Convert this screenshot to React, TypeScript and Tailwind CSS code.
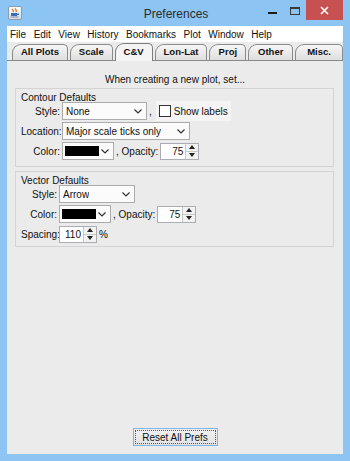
import type { ReactNode } from "react"

const font = { fontFamily: '"Liberation Sans", Arial, sans-serif' }

function Chevron() {
  return (
    <svg width="8" height="5" viewBox="0 0 8 5" className="shrink-0">
      <polyline points="0.5,0.5 4,4 7.5,0.5" fill="none" stroke="#333" strokeWidth="1.2" />
    </svg>
  )
}

function Combo({ width, children }: { width: number; children: ReactNode }) {
  return (
    <div
      className="flex h-[18px] items-center justify-between border border-[#acacac] bg-[#fbfbfb] pl-[3px] pr-[4px]"
      style={{ width }}
    >
      <span className="truncate">{children}</span>
      <Chevron />
    </div>
  )
}

function ColorCombo() {
  return (
    <div className="flex h-[18px] w-[52px] items-center justify-between border border-[#acacac] bg-[#fbfbfb] pl-[2px] pr-[4px]">
      <div className="h-[10px] w-[34px] bg-black" />
      <Chevron />
    </div>
  )
}

function Tri({ up }: { up?: boolean }) {
  return (
    <svg width="6" height="4" viewBox="0 0 6 4">
      <polygon points={up ? "0,4 6,4 3,0" : "0,0 6,0 3,4"} fill="#222" />
    </svg>
  )
}

function Spinner({ width, value }: { width: number; value: string }) {
  return (
    <div className="flex h-[17px] shrink-0 border border-[#abadb3] bg-white" style={{ width }}>
      <div className="flex flex-1 items-center justify-end pr-[2px]">{value}</div>
      <div className="flex w-[13px] flex-col border-l border-[#c8c8c8]">
        <div className="flex flex-1 items-center justify-center border-b border-[#c8c8c8] bg-[#f2f2f2]">
          <Tri up />
        </div>
        <div className="flex flex-1 items-center justify-center bg-[#f2f2f2]">
          <Tri />
        </div>
      </div>
    </div>
  )
}

const tabs = [
  { label: "All Plots", w: 56 },
  { label: "Scale", w: 43 },
  { label: "C&V", w: 38, active: true },
  { label: "Lon-Lat", w: 53 },
  { label: "Proj", w: 37 },
  { label: "Other", w: 45 },
  { label: "Misc.", w: 48 },
]

const menus = ["File", "Edit", "View", "History", "Bookmarks", "Plot", "Window", "Help"]

export default function App() {
  return (
    <div className="flex h-[461px] w-[350px] flex-col bg-[#8cc4f4] text-[10px] text-[#111]" style={font}>
      {/* title bar */}
      <div className="flex h-[26px] items-start">
        <div className="ml-[8px] mt-[6px] flex h-[14px] w-[14px] items-center justify-center rounded-[2px] border border-[#8a9bb0] bg-gradient-to-b from-[#fdfdfd] to-[#d6dde6]">
          <svg width="10" height="10" viewBox="0 0 10 10">
            <path d="M2 1 Q4 3 3 4 M5 0.5 Q7 2.5 6 4" stroke="#e0712a" strokeWidth="1.2" fill="none" />
            <rect x="1" y="5" width="6" height="3" fill="#3b6fb5" />
            <rect x="7" y="5.5" width="2" height="1.5" fill="#3b6fb5" />
            <rect x="0.5" y="8.5" width="8" height="1" fill="#7a8ca6" />
          </svg>
        </div>
        <div className="flex-1 pl-[62px] pt-[5px] text-center text-[12px] text-[#2b2b2b]">Preferences</div>
        <div className="mt-[12px] h-[2px] w-[9px] bg-[#1c1c1c]" />
        <div className="ml-[13px] mt-[7px] h-[8px] w-[10px] border border-t-2 border-[#3a3a3a]" />
        <div className="ml-[6px] mr-[7px] flex h-[20px] w-[37px] items-center justify-center bg-[#c75050]">
          <svg width="9" height="9" viewBox="0 0 9 9">
            <path d="M1 1 L8 8 M8 1 L1 8" stroke="#fff" strokeWidth="1.6" />
          </svg>
        </div>
      </div>

      <div className="mx-[7px] mb-[7px] flex flex-1 flex-col">
        {/* menu bar */}
        <div className="flex h-[16px] items-center gap-[7.5px] bg-white pl-[3px]">
          {menus.map((m) => (
            <span key={m}>{m}</span>
          ))}
        </div>

        {/* tabs */}
        <div className="flex h-[19px] items-end gap-[2px] border-b border-[#8a8a8a] bg-[#ebebeb] pl-[5px]">
          {tabs.map((t) => (
            <div
              key={t.label}
              className={
                t.active
                  ? "-mb-px flex h-[18px] items-center justify-center rounded-tl-[9px] rounded-tr-[5px] border border-b-0 border-[#7d7d7d] bg-[#f4f4f4] text-[9.5px] font-bold"
                  : "flex h-[16px] items-center justify-center rounded-tl-[9px] rounded-tr-[5px] border border-b-0 border-[#8a8a8a] bg-gradient-to-b from-[#f7f7f7] to-[#dedede] text-[9.5px] font-bold"
              }
              style={{ width: t.w }}
            >
              {t.label}
            </div>
          ))}
        </div>

        {/* panel */}
        <div className="flex flex-1 flex-col bg-[#ebebeb] px-[8px]">
          <div className="mt-[11px] h-[14px] text-center">When creating a new plot, set...</div>

          {/* contour */}
          <div className="mr-[1px] mt-[2px] flex flex-col border border-[#d4d4d4] pb-[6px] pl-[5px]">
            <div className="h-[13px] pt-[1px]">Contour Defaults</div>
            <div className="flex flex-col gap-[2px]">
              <div className="flex h-[18px] items-center whitespace-nowrap">
                <span className="w-[39px] text-right">Style:</span>
                <div className="ml-[2px]">
                  <Combo width={85}>None</Combo>
                </div>
                <span className="ml-[2px]">,</span>
                <div className="ml-[4px] flex h-[20px] items-center bg-[#f4f4f4] pl-[3px] pr-[3px]">
                  <div className="h-[12px] w-[12px] border border-[#333] bg-white" />
                  <span className="ml-[3px]">Show labels</span>
                </div>
              </div>
              <div className="flex h-[18px] items-center whitespace-nowrap">
                <span className="w-[39px] text-right">Location:</span>
                <div className="ml-[2px]">
                  <Combo width={128}>Major scale ticks only</Combo>
                </div>
              </div>
              <div className="flex h-[18px] items-center whitespace-nowrap">
                <span className="w-[39px] text-right">Color:</span>
                <div className="ml-[2px]">
                  <ColorCombo />
                </div>
                <span className="ml-[2px] mr-[2px]">, Opacity:</span>
                <Spinner width={39} value="75" />
              </div>
            </div>
          </div>

          {/* vector */}
          <div className="mr-[1px] mt-[4px] flex flex-col border border-[#d4d4d4] pb-[3px] pl-[5px]">
            <div className="h-[13px] pt-[1px]">Vector Defaults</div>
            <div className="flex flex-col gap-[2px]">
              <div className="flex h-[18px] items-center whitespace-nowrap">
                <span className="w-[36px] text-right">Style:</span>
                <div className="ml-[2px]">
                  <Combo width={76}>Arrow</Combo>
                </div>
              </div>
              <div className="flex h-[18px] items-center whitespace-nowrap">
                <span className="w-[36px] text-right">Color:</span>
                <div className="ml-[2px]">
                  <ColorCombo />
                </div>
                <span className="ml-[2px] mr-[2px]">, Opacity:</span>
                <Spinner width={39} value="75" />
              </div>
              <div className="flex h-[18px] items-center whitespace-nowrap">
                <span className="w-[36px] text-right">Spacing:</span>
                <div className="ml-[2px]">
                  <Spinner width={38} value="110" />
                </div>
                <span className="ml-[2px]">%</span>
              </div>
            </div>
          </div>

          <div className="flex-1" />
          <div className="mb-[8px] flex justify-center">
            <div className="flex h-[18px] w-[85px] items-center justify-center border border-[#7eb4ea] bg-gradient-to-b from-[#f2f2f2] to-[#e2e2e2] p-[1px]">
              <div className="flex h-full w-full items-center justify-center border border-dotted border-[#555]">
                Reset All Prefs
              </div>
            </div>
          </div>
        </div>
      </div>
    </div>
  )
}
